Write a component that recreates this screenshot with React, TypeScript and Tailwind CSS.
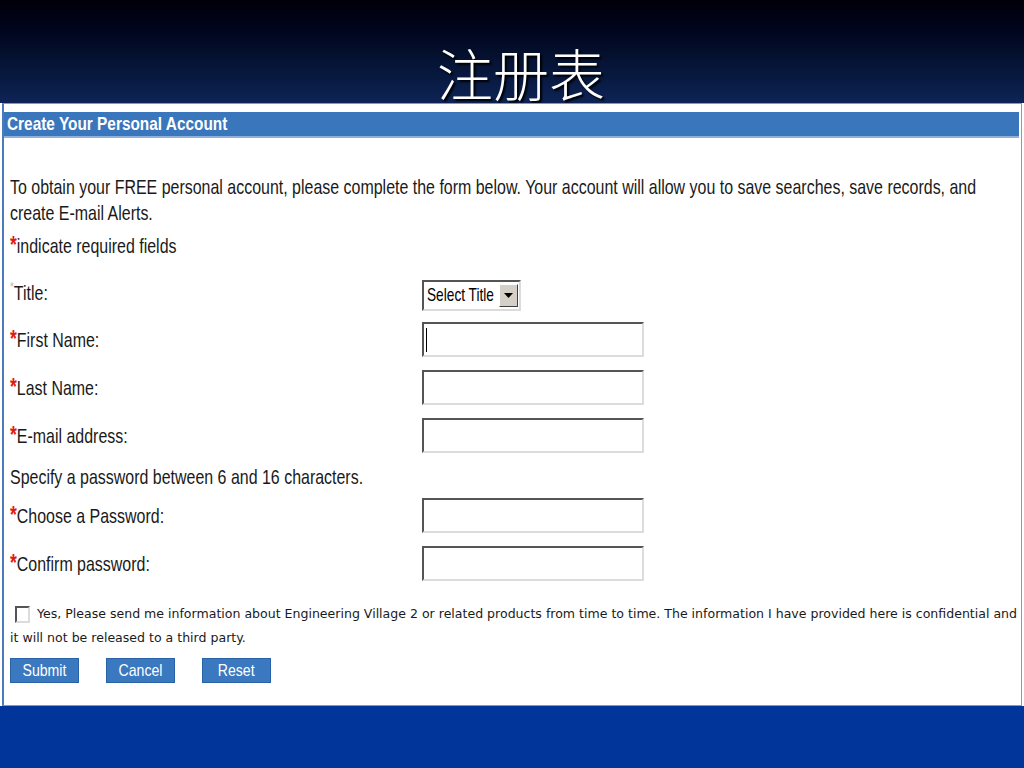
import { ReactNode } from 'react'

const font = "font-['Liberation_Sans',Arial,sans-serif]"

function Squeeze({ children, className = '' }: { children: ReactNode; className?: string }) {
  return <span className={`inline-block origin-left whitespace-nowrap ${className}`}>{children}</span>
}

function Star({ gray = false }: { gray?: boolean }) {
  return (
    <span className={gray ? 'text-[#b8b8b8] text-[13px] align-top' : 'text-[#e01818] font-bold text-[23px]'}>*</span>
  )
}

function FieldLabel({ text, required = true }: { text: string; required?: boolean }) {
  return (
    <div className="w-[412px] shrink-0 flex items-center">
      <Squeeze className="scale-x-[0.76] text-[21px] text-[#1a1a1a]">
        <Star gray={!required} />
        {text}
      </Squeeze>
    </div>
  )
}

function TextInput({ cursor = false }: { cursor?: boolean }) {
  return (
    <div className="relative w-[222px] h-[35px] bg-white border-2 border-t-[#555] border-l-[#555] border-b-[#dcdcdc] border-r-[#dcdcdc]">
      {cursor && <span className="absolute left-[2px] top-[4px] w-px h-[24px] bg-black" />}
    </div>
  )
}

function Row({ label, children, required = true }: { label: string; children: ReactNode; required?: boolean }) {
  return (
    <div className="flex items-center h-[48px]">
      <FieldLabel text={label} required={required} />
      {children}
    </div>
  )
}

function Btn({ label }: { label: string }) {
  return (
    <button className="w-[69px] h-[25px] bg-[#3a78c0] border border-[#2a62a8] text-white flex items-center justify-center">
      <span className="inline-block origin-center whitespace-nowrap scale-x-[0.83] text-[17px] leading-none">{label}</span>
    </button>
  )
}

export default function App() {
  return (
    <div className={`w-[1024px] h-[768px] flex flex-col overflow-hidden ${font}`}>
      <div className="h-[103px] bg-gradient-to-b from-[#00000a] via-[#040f2c] to-[#0e2456] flex justify-center pt-[44px]">
        <h1 className="ml-[18px] text-[56px] leading-[56px] text-white font-light font-['Noto_Sans_CJK_SC',sans-serif] [text-shadow:2px_2px_2px_#000]">
          注册表
        </h1>
      </div>

      <div className="mx-[2px] h-[603px] bg-white border border-[#7d9acb] border-l-2 border-l-[#4d7abd] pt-[8px] pl-[6px] pr-[2px]">
        <div className="-ml-[6px] h-[26px] bg-[#3a76bb] border-b-2 border-b-[#8fb0da] flex items-center pl-[3px]">
          <Squeeze className="scale-x-[0.81] text-[19px] font-bold text-white">Create Your Personal Account</Squeeze>
        </div>

        <div className="mt-[36px] text-[21px] leading-[26px] text-[#1a1a1a]">
          <div>
            <Squeeze className="scale-x-[0.76]">
              To obtain your FREE personal account, please complete the form below. Your account will allow you to save searches, save records, and
            </Squeeze>
          </div>
          <div>
            <Squeeze className="scale-x-[0.76]">create E-mail Alerts.</Squeeze>
          </div>
          <div className="mt-[6px]">
            <Squeeze className="scale-x-[0.76]">
              <Star />
              indicate required fields
            </Squeeze>
          </div>
        </div>

        <div className="mt-[12px] flex items-center h-[44px]">
          <FieldLabel text="Title:" required={false} />
          <div className="mt-[4px] h-[31px] flex items-center bg-white border-2 border-t-[#555] border-l-[#555] border-b-[#dcdcdc] border-r-[#dcdcdc]">
            <span className="w-[75px] pl-[3px] text-[19px] text-black">
              <Squeeze className="scale-x-[0.72]">Select Title</Squeeze>
            </span>
            <span className="w-[19px] h-[23px] mr-[1px] bg-[#d4d0c8] border border-t-white border-l-white border-b-[#404040] border-r-[#404040] flex items-center justify-center">
              <svg width="9" height="5" viewBox="0 0 9 5"><path d="M0 0h9L4.5 5z" fill="#000" /></svg>
            </span>
          </div>
        </div>

        <Row label="First Name:"><TextInput cursor /></Row>
        <Row label="Last Name:"><TextInput /></Row>
        <Row label="E-mail address:"><TextInput /></Row>

        <div className="h-[32px] pt-[3px] flex items-center">
          <Squeeze className="scale-x-[0.76] text-[21px] text-[#1a1a1a]">Specify a password between 6 and 16 characters.</Squeeze>
        </div>

        <Row label="Choose a Password:"><TextInput /></Row>
        <Row label="Confirm password:"><TextInput /></Row>

        <div className="mt-[14px] text-[13px] text-[#1a1a1a] font-['DejaVu_Sans',Verdana,sans-serif]">
          <div className="h-[26px] flex items-center">
            <span className="shrink-0 ml-[5px] w-[15px] h-[17px] bg-white border-2 border-t-[#555] border-l-[#555] border-b-[#dcdcdc] border-r-[#dcdcdc]" />
            <Squeeze className="ml-[7px] scale-x-[0.965]">
              Yes, Please send me information about Engineering Village 2 or related products from time to time. The information I have provided here is confidential and
            </Squeeze>
          </div>
          <div className="h-[22px] flex items-center">
            <Squeeze className="scale-x-[0.965]">it will not be released to a third party.</Squeeze>
          </div>
        </div>

        <div className="mt-[9px] flex gap-[27px]">
          <Btn label="Submit" />
          <Btn label="Cancel" />
          <Btn label="Reset" />
        </div>
      </div>

      <div className="flex-1 bg-[#02359a]" />
    </div>
  )
}
